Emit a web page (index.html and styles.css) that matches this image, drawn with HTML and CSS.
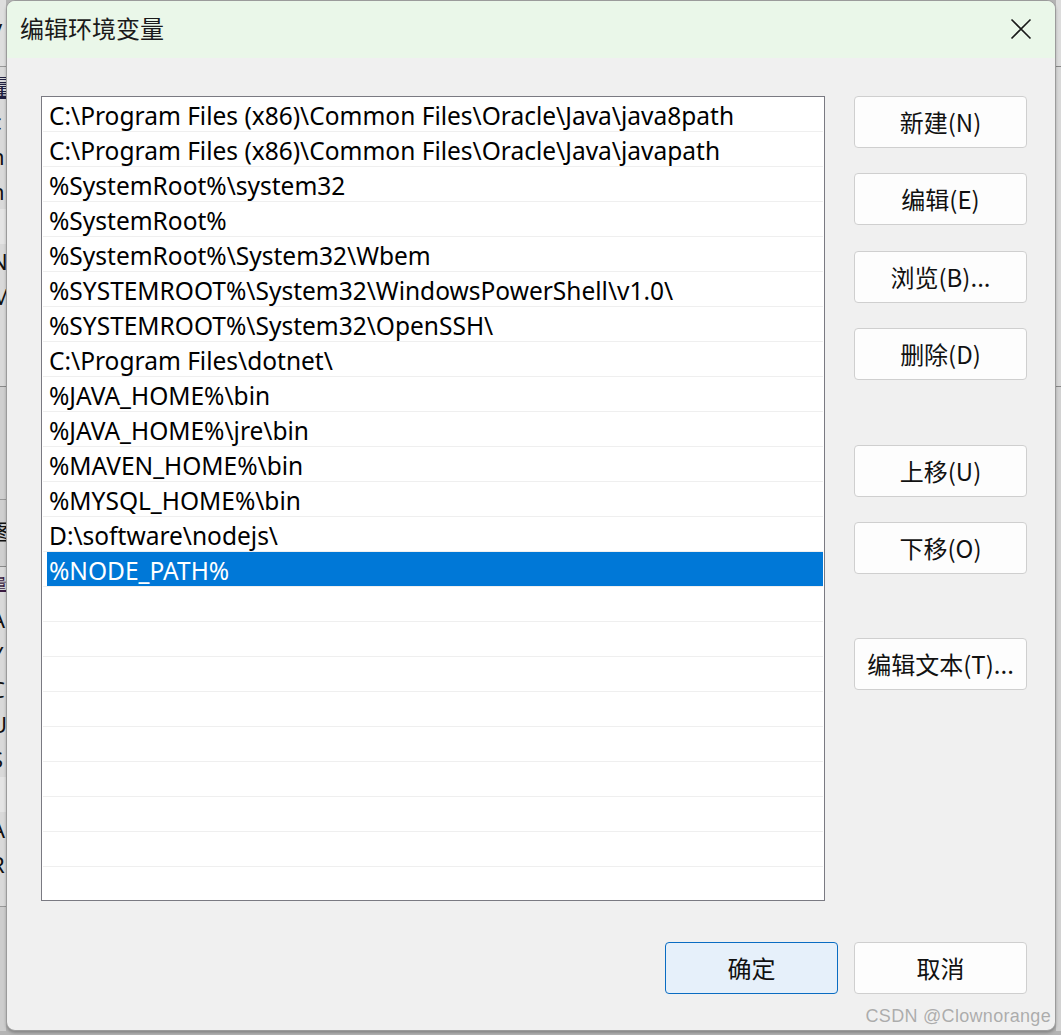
FILE: index.html
```html
<!DOCTYPE html>
<html lang="zh-CN">
<head>
<meta charset="utf-8">
<title>编辑环境变量</title>
<link rel="stylesheet" href="styles.css">
</head>
<body>
<div class="desktop">
  <div class="behind-left">
    <div class="bl-top"><span>v</span></div>
    <div class="bl-list">
      <span class="u">量</span><span>c</span><span>n</span><span>n</span><span class="hl">t</span><span>N</span><span>M</span>
    </div>
    <div class="bl-mid"></div>
    <div class="bl-mid2"><span>图</span></div>
    <div class="bl-list2">
      <span class="u">量</span><span>A</span><span>Y</span><span>C</span><span>U</span><span>S</span><span class="hl">t</span><span>A</span><span>R</span>
    </div>
    <div class="bl-bottom"></div>
  </div>

  <div class="dialog">
    <div class="titlebar">
      <span class="title">编辑环境变量</span>
      <svg class="close" width="22" height="22" viewBox="0 0 22 22" aria-label="关闭">
        <path d="M1.5 1.5 L20.5 20.5 M20.5 1.5 L1.5 20.5" stroke="#1a1a1a" stroke-width="1.6" fill="none"/>
      </svg>
    </div>
    <div class="content">
      <div class="main">
        <div class="listbox">
          <div class="row">C:\Program Files (x86)\Common Files\Oracle\Java\java8path</div>
          <div class="row">C:\Program Files (x86)\Common Files\Oracle\Java\javapath</div>
          <div class="row">%SystemRoot%\system32</div>
          <div class="row">%SystemRoot%</div>
          <div class="row">%SystemRoot%\System32\Wbem</div>
          <div class="row">%SYSTEMROOT%\System32\WindowsPowerShell\v1.0\</div>
          <div class="row">%SYSTEMROOT%\System32\OpenSSH\</div>
          <div class="row">C:\Program Files\dotnet\</div>
          <div class="row">%JAVA_HOME%\bin</div>
          <div class="row">%JAVA_HOME%\jre\bin</div>
          <div class="row">%MAVEN_HOME%\bin</div>
          <div class="row">%MYSQL_HOME%\bin</div>
          <div class="row">D:\software\nodejs\</div>
          <div class="row selected"><span class="sel">%NODE_PATH%</span></div>
          <div class="row"></div>
          <div class="row"></div>
          <div class="row"></div>
          <div class="row"></div>
          <div class="row"></div>
          <div class="row"></div>
          <div class="row"></div>
          <div class="row"></div>
          <div class="row last"></div>
        </div>
        <div class="side">
          <button class="btn g1">新建(N)</button>
          <button class="btn g1">编辑(E)</button>
          <button class="btn g1">浏览(B)...</button>
          <button class="btn g1">删除(D)</button>
          <button class="btn g2">上移(U)</button>
          <button class="btn g1">下移(O)</button>
          <button class="btn g3">编辑文本(T)...</button>
        </div>
      </div>
      <div class="footer">
        <button class="btn primary">确定</button>
        <button class="btn">取消</button>
      </div>
    </div>
    <div class="watermark">CSDN @Clownorange</div>
  </div>

  <div class="behind-right">
    <div class="br-a"></div>
    <div class="br-b"></div>
    <div class="br-c"></div>
  </div>
</div>
</body>
</html>
```

FILE: styles.css
```css
* { box-sizing: border-box; }
html, body {
  margin: 0;
  padding: 0;
  width: 1061px;
  height: 1035px;
  overflow: hidden;
  background: #b9b9b9;
  font-family: "Noto Sans", "Noto Sans CJK SC", sans-serif;
}
.desktop {
  position: relative;
  width: 1061px;
  height: 1035px;
  display: flex;
  background: #b4b4b4;
}

/* background windows peeking out at the edges */
.behind-left {
  width: 6px;
  height: 1031px;
  overflow: hidden;
  background: #d4d4d4;
  display: flex;
  flex-direction: column;
  font-family: "Noto Sans", "Noto Sans CJK SC", sans-serif;
  font-size: 22px;
  color: #111;
}
.behind-left span {
  display: block;
  height: 35px;
  line-height: 35px;
  margin-left: -9px;
}
.bl-top {
  height: 67px;
  background: #dedede;
  border-bottom: 1px solid #999;
  padding-top: 2px;
}
.bl-top span { line-height: 50px; }
.bl-list {
  height: 320px;
  background: #d9d9d9;
  padding-top: 2px;
  border-bottom: 1px solid #8a8a8a;
}
.bl-list .u { text-decoration: underline; color: #202040; }
.bl-list .hl, .bl-list2 .hl { background: #e4e4e4; }
.bl-mid {
  height: 113px;
  background: #cfcfcf;
  border-bottom: 1px solid #999;
}
.bl-mid2 {
  height: 67px;
  background: #cfcfcf;
  border-bottom: 1px solid #8a8a8a;
  padding-top: 14px;
}
.bl-list2 {
  height: 340px;
  background: #d9d9d9;
  border-bottom: 1px solid #999;
}
.bl-list2 .u { text-decoration: underline; color: #3a1a40; font-size: 16px; }
.bl-bottom { flex: 1; background: #cdcdcd; }

.behind-right {
  width: 5px;
  height: 1031px;
  display: flex;
  flex-direction: column;
  background: #d6d6d6;
}
.br-a { height: 67px; background: #dcdcdc; border-bottom: 1px solid #888; }
.br-b { height: 320px; background: #d8d8d8; border-bottom: 1px solid #888; }
.br-c { flex: 1; background: #d2d2d2; }

/* dialog window */
.dialog {
  position: relative;
  width: 1050px;
  height: 1031px;
  background: #f0f0f0;
  border: 1px solid #9b9b9b;
  border-radius: 9px;
  overflow: hidden;
  display: flex;
  flex-direction: column;
  box-shadow: 0 2px 3px rgba(0,0,0,0.25);
}
.titlebar {
  height: 57px;
  flex: none;
  background: #eaf7e9;
  display: flex;
  align-items: center;
  justify-content: space-between;
  padding: 0 23px 0 13px;
}
.title {
  font-family: "Noto Sans CJK SC", sans-serif;
  font-size: 24px;
  color: #1b1b1b;
  padding-bottom: 4px;
}
.close { display: block; margin-bottom: 1px; }

.content {
  flex: 1;
  display: flex;
  flex-direction: column;
  padding: 38px 28px 0 34px;
}
.main {
  display: flex;
  gap: 29px;
  align-items: flex-start;
}
.listbox {
  width: 784px;
  height: 805px;
  background: #fff;
  border: 1px solid #7a7a82;
  padding: 0 1px 0 1px;
  overflow: hidden;
}
.row {
  height: 35px;
  border-bottom: 1px solid #efefef;
  padding-left: 6px;
  font-size: 24.5px;
  line-height: 38px;
  color: #000;
  white-space: nowrap;
}
.row.selected {
  padding: 0 0 0 4px;
  border-bottom-color: #efefef;
}
.row .sel {
  display: block;
  height: 34px;
  line-height: 37px;
  background: #0078d7;
  color: #fff;
  padding-left: 2px;
}
.row.last { border-bottom: none; }

.side {
  width: 173px;
  display: flex;
  flex-direction: column;
}
.btn {
  width: 173px;
  height: 52px;
  background: #fdfdfd;
  border: 1px solid #cfcfcf;
  border-radius: 4px;
  font-family: "Noto Sans CJK SC", sans-serif;
  font-size: 24px;
  color: #111;
  padding: 0 0 2px 0;
  display: flex;
  align-items: center;
  justify-content: center;
}
.side .g1 { margin-bottom: 25px; }
.side .g1:nth-child(2) { margin-bottom: 26px; }
.side .g1:nth-child(4) { margin-bottom: 65px; }
.side .g2 { margin-bottom: 25px; }
.side .g1:nth-child(6) { margin-bottom: 64px; }

.footer {
  display: flex;
  justify-content: flex-end;
  gap: 16px;
  margin-top: 41px;
}
.btn.primary {
  background: #e6f0fa;
  border: 1px solid #0a6cc2;
}

.watermark {
  position: absolute;
  right: 4px;
  bottom: 3px;
  font-family: "Liberation Sans", "Noto Sans", sans-serif;
  font-size: 18px;
  color: rgba(150,150,150,0.75);
  letter-spacing: 0.3px;
}
```
